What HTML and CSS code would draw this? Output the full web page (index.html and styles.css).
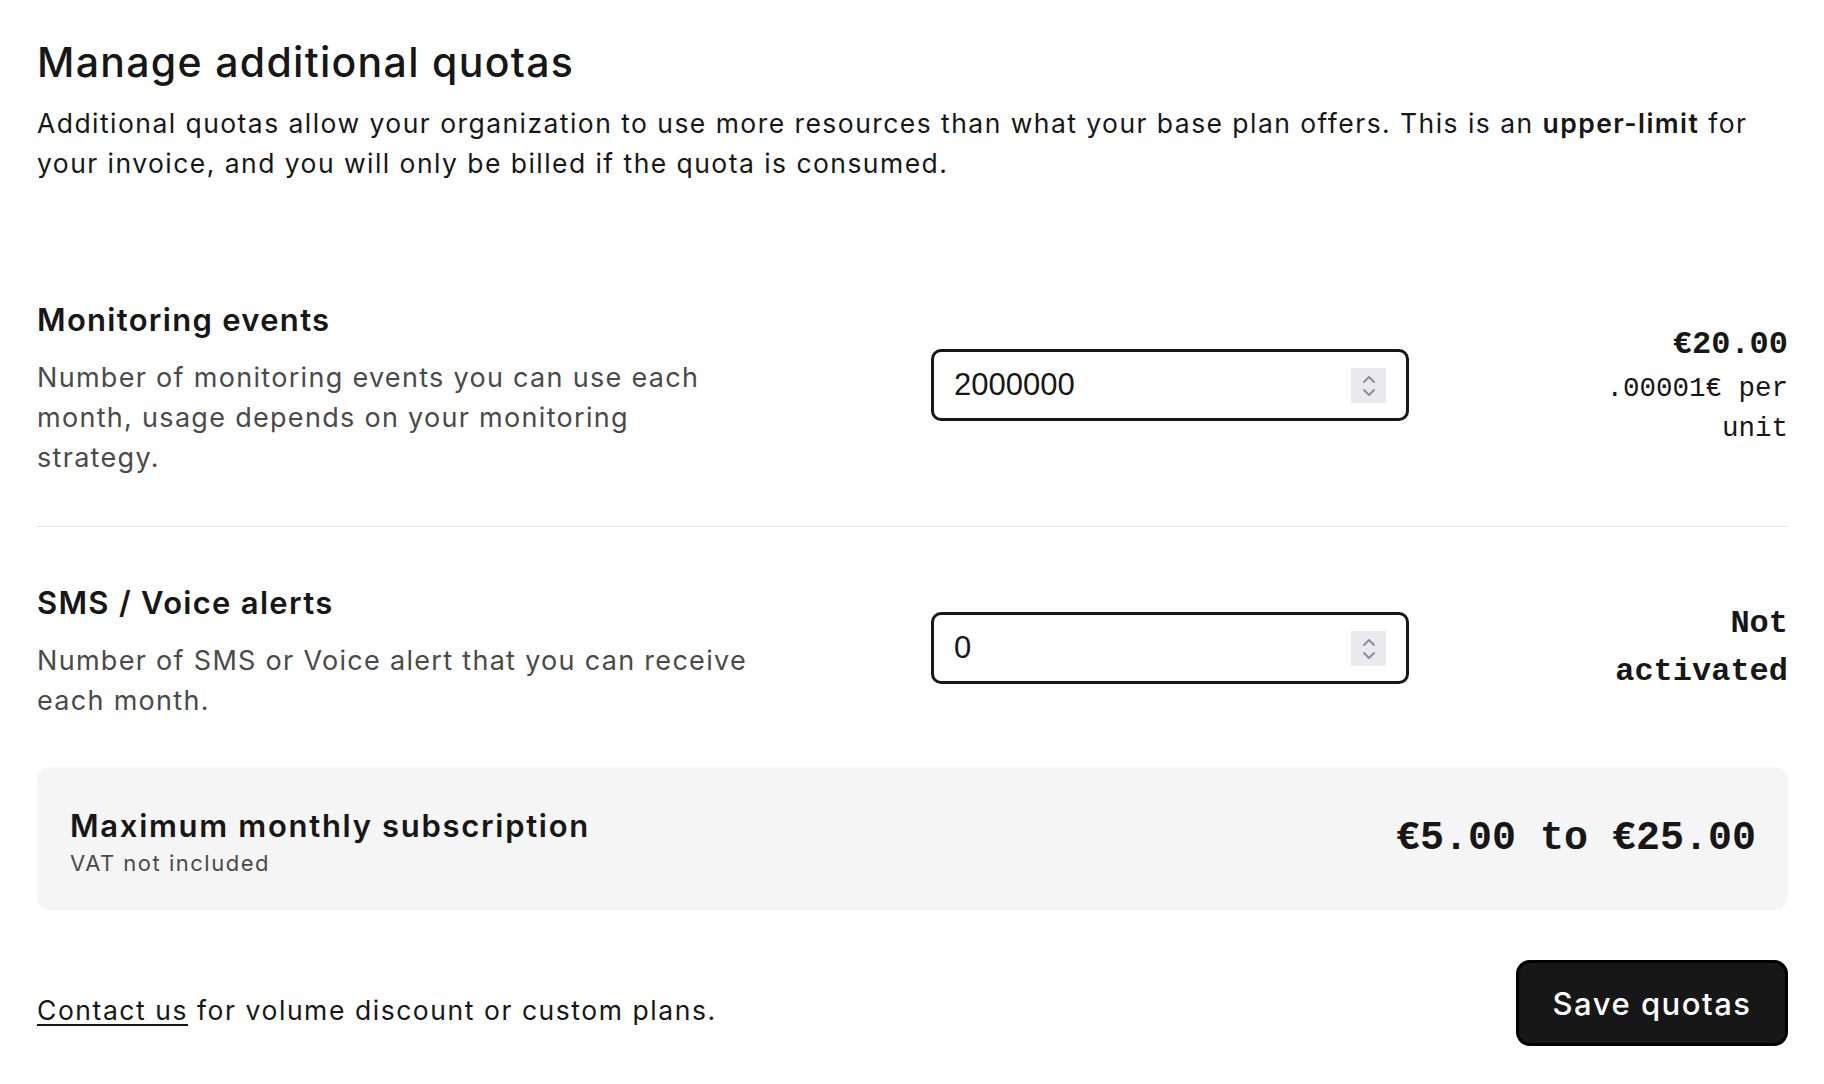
FILE: index.html
```html
<!DOCTYPE html>
<html lang="en">
<head>
<meta charset="utf-8">
<title>Manage additional quotas</title>
<link rel="stylesheet" href="styles.css">
</head>
<body>
<main class="page">
  <header class="intro">
    <h1 class="title">Manage additional quotas</h1>
    <p class="lead">Additional quotas allow your organization to use more resources than what your base plan offers. This is an <strong>upper-limit</strong> for your invoice, and you will only be billed if the quota is consumed.</p>
  </header>

  <section class="quotas">
    <div class="quota-row">
      <div class="quota-info">
        <h2 class="quota-name">Monitoring events</h2>
        <p class="quota-desc">Number of monitoring events you can use each month, usage depends on your monitoring strategy.</p>
      </div>
      <div class="quota-field">
        <input class="quota-input" type="text" value="2000000" aria-label="Monitoring events">
        <span class="spinner" aria-hidden="true">
          <svg width="14" height="26" viewBox="0 0 14 26"><path d="M2 9 L7 4 L12 9" fill="none" stroke="#8d8d92" stroke-width="2" stroke-linecap="round" stroke-linejoin="round"/><path d="M2 17 L7 22 L12 17" fill="none" stroke="#8d8d92" stroke-width="2" stroke-linecap="round" stroke-linejoin="round"/></svg>
        </span>
      </div>
      <div class="quota-price">
        <div class="price-main">€20.00</div>
        <div class="price-unit">.00001€ per unit</div>
      </div>
    </div>

    <div class="quota-row">
      <div class="quota-info">
        <h2 class="quota-name">SMS / Voice alerts</h2>
        <p class="quota-desc">Number of SMS or Voice alert that you can receive each month.</p>
      </div>
      <div class="quota-field">
        <input class="quota-input" type="text" value="0" aria-label="SMS / Voice alerts">
        <span class="spinner" aria-hidden="true">
          <svg width="14" height="26" viewBox="0 0 14 26"><path d="M2 9 L7 4 L12 9" fill="none" stroke="#8d8d92" stroke-width="2" stroke-linecap="round" stroke-linejoin="round"/><path d="M2 17 L7 22 L12 17" fill="none" stroke="#8d8d92" stroke-width="2" stroke-linecap="round" stroke-linejoin="round"/></svg>
        </span>
      </div>
      <div class="quota-price">
        <div class="price-main">Not activated</div>
      </div>
    </div>
  </section>

  <div class="summary">
    <div class="summary-text">
      <div class="summary-title">Maximum monthly subscription</div>
      <div class="summary-note">VAT not included</div>
    </div>
    <div class="summary-amount">€5.00 to €25.00</div>
  </div>

  <footer class="footer">
    <p class="contact"><a class="contact-link" href="#">Contact us</a> for volume discount or custom plans.</p>
    <button class="save-btn" type="button">Save quotas</button>
  </footer>
</main>
</body>
</html>
```

FILE: styles.css
```css
* { box-sizing: border-box; }

html, body {
  margin: 0;
  padding: 0;
  background: #ffffff;
}

body {
  font-family: Inter, "Noto Sans", sans-serif;
  color: #171717;
}

.page {
  padding: 38px 36px 37px 37px;
}

.title {
  margin: 0;
  font-size: 41px;
  line-height: 48px;
  font-weight: 500;
  letter-spacing: 1.3px;
}

.lead {
  margin: 17px 0 0;
  font-size: 26.5px;
  line-height: 40px;
  font-weight: 400;
  letter-spacing: 1.45px;
}

.lead strong {
  font-weight: 600;
}

.quotas {
  margin-top: 61px;
}

.quota-row {
  display: grid;
  grid-template-columns: 714px 478px 1fr;
  column-gap: 180px;
  align-items: center;
  padding: 48px 0;
  border-bottom: 1px solid #e5e5e5;
}

.quota-row:last-child {
  border-bottom: none;
  padding-bottom: 46px;
}

.quota-name {
  margin: 0;
  font-size: 31px;
  line-height: 56px;
  font-weight: 600;
  letter-spacing: 1.3px;
}

.quota-desc {
  margin: 10px 0 0;
  font-size: 27px;
  line-height: 40px;
  color: #4a4a4a;
  letter-spacing: 1.3px;
}

.quota-field {
  position: relative;
  height: 72px;
}

.quota-input {
  width: 100%;
  height: 72px;
  margin: 0;
  padding: 0 70px 0 20px;
  border: 3.5px solid #171717;
  border-radius: 10px;
  font-family: "Liberation Sans", Arial, sans-serif;
  font-size: 31px;
  color: #171717;
  background: #ffffff;
  outline: none;
}

.spinner {
  position: absolute;
  right: 23px;
  top: 50%;
  width: 35px;
  height: 35px;
  margin-top: -17px;
  background: #e9e9ee;
  display: flex;
  align-items: center;
  justify-content: center;
}

.spinner svg {
  display: block;
}

.quota-price {
  text-align: right;
  font-family: "Liberation Mono", "Courier New", monospace;
}

.price-main {
  font-size: 32px;
  line-height: 48px;
  font-weight: 700;
}

.price-unit {
  font-size: 27.5px;
  line-height: 40px;
}

.summary {
  display: flex;
  align-items: center;
  justify-content: space-between;
  background: #f5f5f5;
  border-radius: 14px;
  padding: 0 32px 0 33px;
  height: 143px;
}

.summary-text {
  padding-top: 8px;
}

.summary-title {
  font-size: 31px;
  line-height: 38px;
  font-weight: 600;
  letter-spacing: 1.7px;
}

.summary-note {
  margin-top: 2px;
  font-size: 22px;
  line-height: 32px;
  color: #4a4a4a;
  letter-spacing: 1.5px;
}

.summary-amount {
  font-family: "Liberation Mono", "Courier New", monospace;
  font-size: 40px;
  font-weight: 700;
}

.footer {
  display: flex;
  align-items: center;
  justify-content: space-between;
  margin-top: 50px;
}

.contact {
  margin: 0;
  padding-top: 14px;
  font-size: 26.5px;
  line-height: 40px;
  letter-spacing: 1.55px;
}

.contact-link {
  color: #171717;
  text-decoration: underline;
  text-underline-offset: 4px;
  text-decoration-thickness: 2px;
}

.save-btn {
  width: 272px;
  height: 86px;
  background: #171717;
  color: #ffffff;
  border: 3.5px solid #000000;
  border-radius: 14px;
  font-family: Inter, "Noto Sans", sans-serif;
  font-size: 31px;
  font-weight: 500;
  letter-spacing: 1.5px;
  padding: 0;
}
```
